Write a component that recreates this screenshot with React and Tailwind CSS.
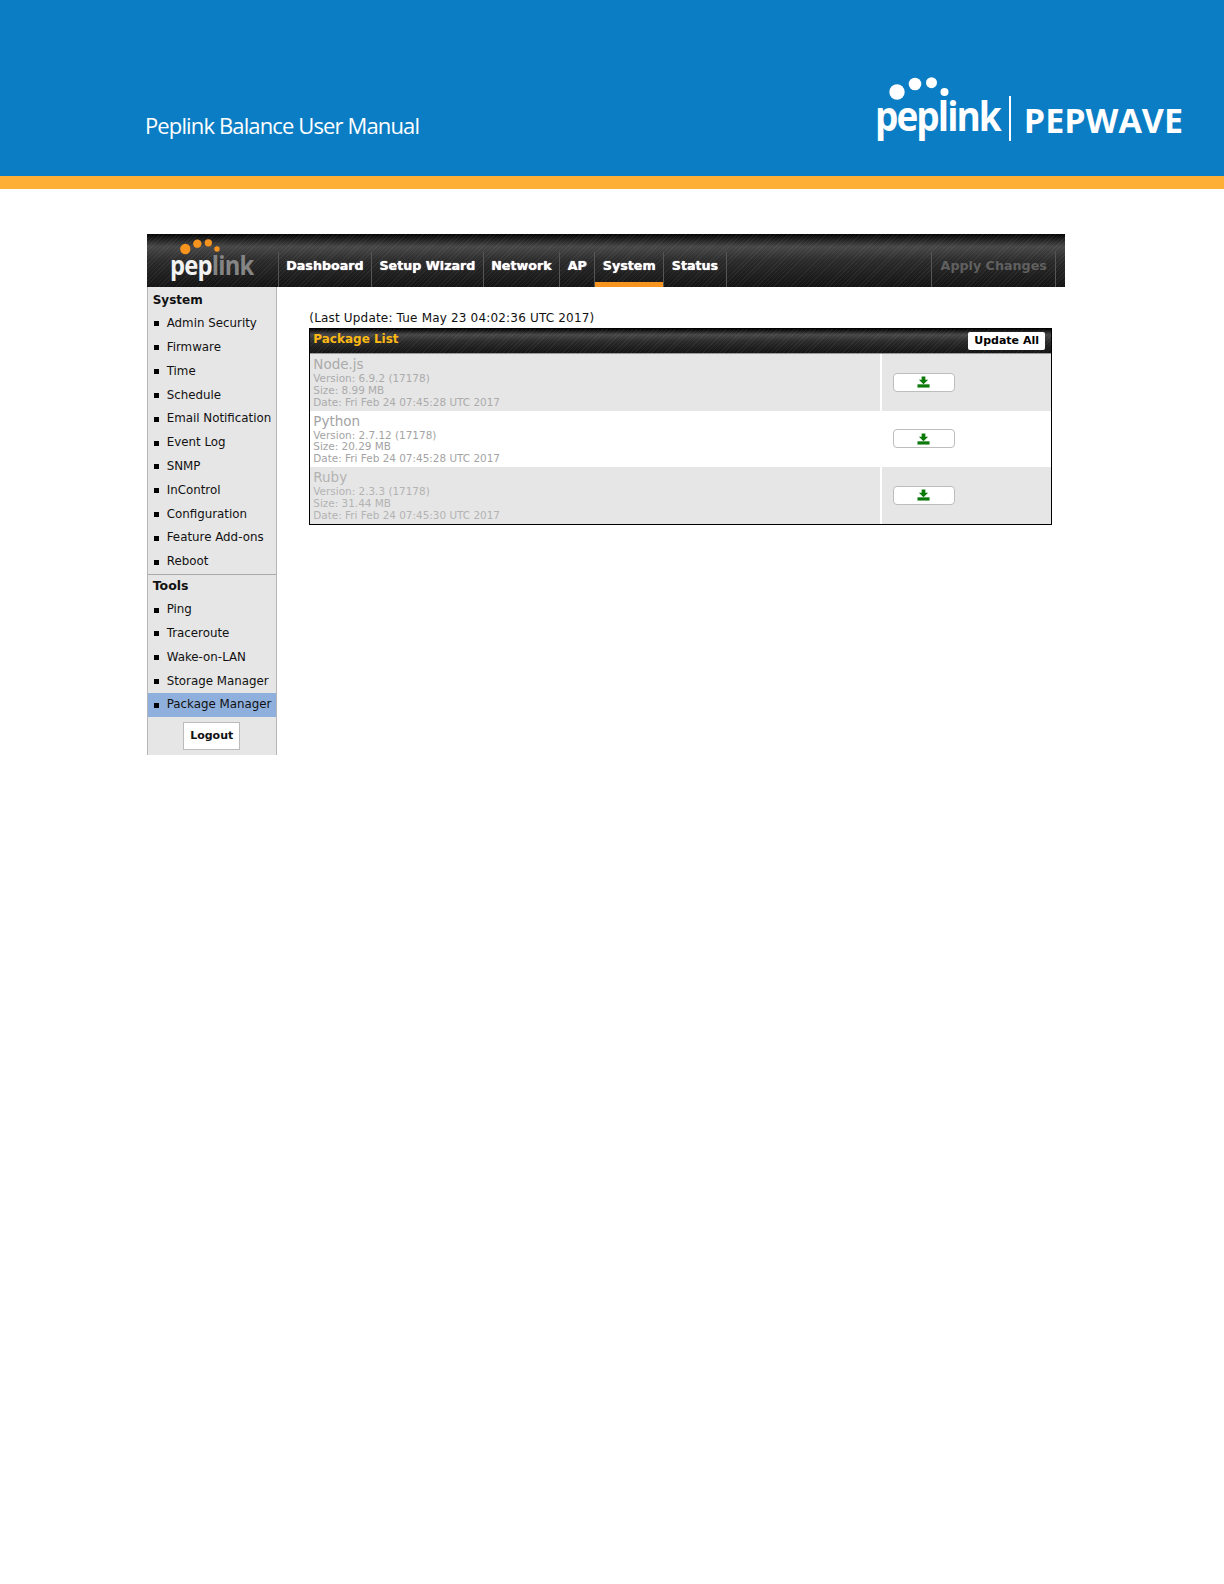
const stripe = "bg-[repeating-linear-gradient(135deg,rgba(255,255,255,0.05)_0px,rgba(255,255,255,0.05)_1px,transparent_1px,transparent_3px),linear-gradient(180deg,#030303_0%,#474747_24%,#2b2b2b_50%,#131313_100%)]";

const systemItems = ["Admin Security", "Firmware", "Time", "Schedule", "Email Notification", "Event Log", "SNMP", "InControl", "Configuration", "Feature Add-ons", "Reboot"];
const toolItems = ["Ping", "Traceroute", "Wake-on-LAN", "Storage Manager", "Package Manager"];
const navItems = [
  { label: "Dashboard", w: "w-[93.6px]" },
  { label: "Setup Wizard", w: "w-[111.4px]" },
  { label: "Network", w: "w-[76.6px]" },
  { label: "AP", w: "w-[35px]" },
  { label: "System", w: "w-[69px]", active: true },
  { label: "Status", w: "w-[62.4px]" },
];
const packages = [
  { name: "Node.js", version: "6.9.2 (17178)", size: "8.99 MB", date: "Fri Feb 24 07:45:28 UTC 2017", bg: "bg-[#e6e6e6]", color: "text-[#ababab]" },
  { name: "Python", version: "2.7.12 (17178)", size: "20.29 MB", date: "Fri Feb 24 07:45:28 UTC 2017", bg: "bg-white", color: "text-[#a3a3a3]" },
  { name: "Ruby", version: "2.3.3 (17178)", size: "31.44 MB", date: "Fri Feb 24 07:45:30 UTC 2017", bg: "bg-[#e6e6e6]", color: "text-[#b3b3b3]" },
];

function Dots({ className, fill }) {
  return (
    <svg viewBox="0 0 60 24" className={className} fill={fill}>
      <circle cx="8" cy="15" r="7.7" />
      <circle cx="26" cy="7" r="6.3" />
      <circle cx="42.5" cy="5.7" r="5.5" />
      <circle cx="55.5" cy="15" r="4" />
    </svg>
  );
}

function SideRow({ label, active }) {
  return (
    <div className={`flex h-[23.83px] items-center pl-[6px] ${active ? "bg-[#8fb0dc]" : ""}`}>
      <span className="h-[5px] w-[5px] shrink-0 bg-black" />
      <span className="ml-[8px] whitespace-nowrap text-[11.85px] text-[#111]">{label}</span>
    </div>
  );
}

function DownloadIcon() {
  return (
    <svg viewBox="0 0 14 12" className="h-[12px] w-[13px]" fill="#0b7a0b">
      <path d="M5 0h4v3.5h3L7 8.5 2 3.5h3z" />
      <path d="M.5 8.5h13V12H.5z" />
    </svg>
  );
}

export default function App() {
  return (
    <div className="min-h-[1584px] w-[1224px] bg-white font-['DejaVu_Sans',sans-serif]">
      <header className="flex h-[176px] items-start justify-between bg-[#0b7dc4] pl-[145px] pr-[41px]">
        <div className="mt-[110px] font-['Open_Sans',sans-serif] text-[22px] leading-[30px] tracking-[-0.87px] text-white">Peplink Balance User Manual</div>
        <div className="mt-[77px] flex items-start">
          <div className="relative h-[70px] w-[134px] pt-[14px]">
            <Dots className="absolute left-[14px] top-0 h-[24px] w-[60px]" fill="#fff" />
            <div className="origin-left scale-x-[0.88] whitespace-nowrap font-['Open_Sans',sans-serif] text-[42px] font-bold leading-[48px] tracking-[-2.2px] text-white">peplink</div>
          </div>
          <div className="mt-[19px] h-[45px] w-[2px] bg-white" />
          <div className="ml-[13px] mt-[21px] font-['Open_Sans',sans-serif] text-[34px] font-bold leading-[44px] text-white">PEPWAVE</div>
        </div>
      </header>
      <div className="h-[13px] bg-[#fdb035]" />

      <main className="ml-[146.7px] mt-[45px] w-[918px]">
        <nav className={`flex h-[53px] ${stripe}`}>
          <div className="relative w-[131px] shrink-0">
            <Dots className="absolute left-[33.7px] top-[5px] h-[16px] w-[40px]" fill="#f7941d" />
            <div className="absolute left-[23px] top-[15px] origin-left scale-x-[0.88] whitespace-nowrap font-['Open_Sans',sans-serif] text-[27px] font-bold leading-[32px] tracking-[-0.9px] text-[#f2f2f2]">
              pep<span className="text-[#858585]">link</span>
            </div>
          </div>
          <div className="mt-[18px] flex flex-1">
            {navItems.map((n) => (
              <div key={n.label} className={`relative flex h-[35px] ${n.w} items-start justify-center border-l border-[#555] pt-[4.7px] text-[12.7px] font-bold leading-[18px] text-white [text-shadow:0_0_1px_#fff]`}>
                {n.label}
                {n.active && <span className="absolute inset-x-0 bottom-0 h-[5px] bg-[#f7941d]" />}
              </div>
            ))}
            <div className="h-[35px] flex-1 border-l border-[#555]" />
            <div className="flex h-[35px] w-[125.4px] items-start justify-center border-x border-[#555] pt-[4.7px] text-[12.7px] font-bold leading-[18px] text-[#606060]">Apply Changes</div>
            <div className="w-[8.3px]" />
          </div>
        </nav>

        <div className="flex">
          <aside className="h-[468px] w-[130px] shrink-0 border-x border-[#b5b5b5] bg-[#e6e6e6] pt-[1px]">
            <div className="flex h-[24px] items-center pl-[5px] text-[12px] font-bold text-[#111]">System</div>
            {systemItems.map((s) => <SideRow key={s} label={s} />)}
            <div className="flex h-[24px] items-center border-t border-[#aaa] pl-[5px] text-[12.5px] font-bold text-[#111]">Tools</div>
            {toolItems.map((s) => <SideRow key={s} label={s} active={s === "Package Manager"} />)}
            <div className="mt-[5px] flex justify-center">
              <div className="flex h-[28px] w-[57px] items-center justify-center border border-[#bbb] bg-white text-[11px] font-bold text-[#111]">Logout</div>
            </div>
          </aside>

          <section className="ml-[32.6px] w-[742.5px] pt-[23px]">
            <div className="h-[18px] text-[12px] leading-[16px] tracking-[0.18px] text-[#111]">(Last Update: Tue May 23 04:02:36 UTC 2017)</div>
            <div className="border border-black">
              <div className={`flex h-[25px] items-center justify-between border-b border-[#999] pl-[3px] pr-[5.7px] ${stripe}`}>
                <span className="mb-[4px] text-[12px] font-bold text-[#fdb913]">Package List</span>
                <span className="flex h-[18px] w-[77px] items-center justify-center rounded-[2px] bg-white text-[11px] font-bold text-black">Update All</span>
              </div>
              {packages.map((p) => (
                <div key={p.name} className={`flex h-[56.7px] ${p.bg}`}>
                  <div className={`w-[570px] pl-[3px] pt-[2px] ${p.color}`}>
                    <div className="text-[13.5px] leading-[17px]">{p.name}</div>
                    <div className="text-[10.45px] leading-[11.8px]">Version: {p.version}</div>
                    <div className="text-[10.45px] leading-[11.8px]">Size: {p.size}</div>
                    <div className="text-[10.45px] leading-[11.8px]">Date: {p.date}</div>
                  </div>
                  <div className="w-[2px] bg-white" />
                  <div className="flex flex-1 items-start pl-[10.4px] pt-[18.5px]">
                    <div className="flex h-[19px] w-[62px] items-center justify-center rounded-[4px] border border-[#bdbdbd] bg-white">
                      <DownloadIcon />
                    </div>
                  </div>
                </div>
              ))}
            </div>
          </section>
        </div>
      </main>
    </div>
  );
}
